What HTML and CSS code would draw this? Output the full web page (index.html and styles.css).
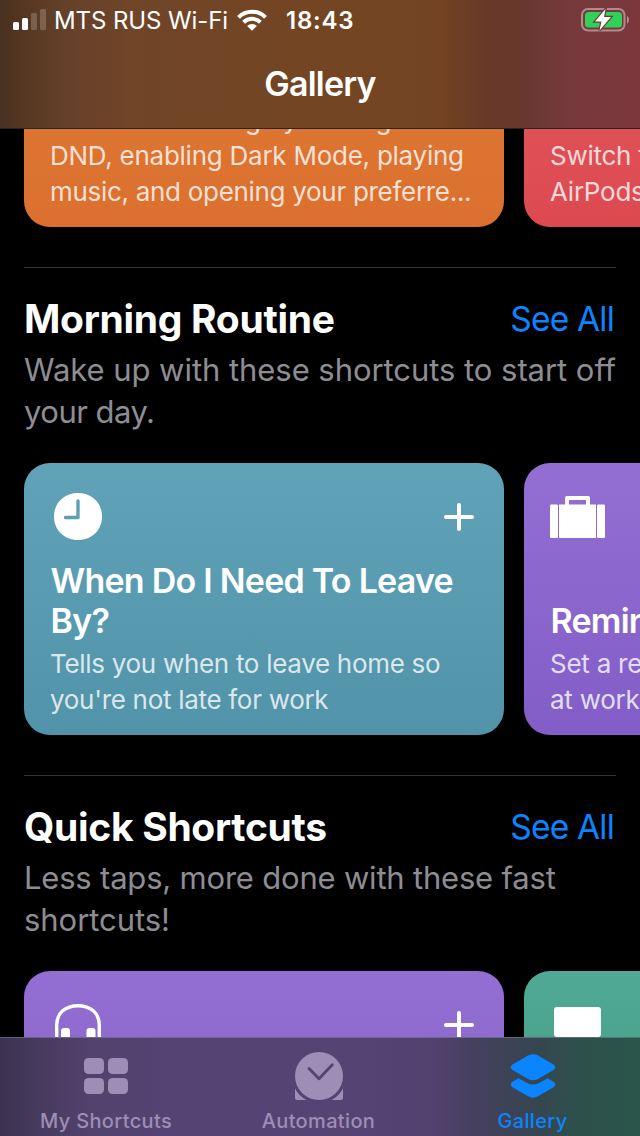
FILE: index.html
```html
<!DOCTYPE html>
<html lang="en">
<head>
<meta charset="utf-8">
<title>Gallery</title>
<link rel="stylesheet" href="styles.css">
</head>
<body>
<div class="screen">
  <header class="topbar">
    <div class="status">
      <svg class="signal" width="33" height="21" viewBox="0 0 33 21"><rect x="0" y="13" width="6" height="8" rx="1.5" fill="#fff"/><rect x="9" y="9" width="6" height="12" rx="1.5" fill="#fff"/><rect x="18" y="4" width="6" height="17" rx="1.5" fill="#fff" opacity=".2"/><rect x="27" y="0" width="6" height="21" rx="1.5" fill="#fff" opacity=".2"/></svg>
      <span class="carrier">MTS RUS Wi-Fi</span>
      <svg class="wifi" width="30" height="22" viewBox="0 0 30 22" fill="none" stroke="#fff" stroke-width="4"><path d="M1.5 8.4a19 19 0 0 1 27 0"/><path d="M6.600 13.300a12 12 0 0 1 16.800 0"/><path d="M15 21.800l-4.900-4.900a7 7 0 0 1 9.800 0z" fill="#fff" stroke="none"/></svg>
      <span class="time">18:43</span>
      <svg class="battery" width="49" height="24" viewBox="0 0 49 24"><rect x="1" y="1" width="42.500" height="21.500" rx="6" fill="none" stroke="#fff" stroke-opacity=".42" stroke-width="2"/><path d="M46 8v7.500c2.500-1 2.500-6.500 0-7.500z" fill="#fff" opacity=".45"/><rect x="4" y="4" width="37" height="15.500" rx="3.500" fill="#30d158"/><path d="M24.500 1L14 13.500h6.500l-2 9L30 9h-7z" fill="#fff" stroke="#6e3a38" stroke-width="2.400" paint-order="stroke"/></svg>
    </div>
    <h1 class="title"><span>Gallery</span></h1>
  </header>

  <main class="content">
    <div class="cards cards-cut">
      <article class="card orange"><p class="text"><span class="wide">Focus on reading by turning on</span><br>DND, enabling Dark Mode, playing<br><span class="tight">music, and opening your preferre...</span></p></article>
      <article class="card red"><p class="text">Switch the output to<br>AirPods or another</p></article>
    </div>

    <section class="section">
      <div class="heading"><h2 class="name">Morning Routine</h2><a class="all">See All</a></div>
      <p class="about"><span class="loose">Wake up with these shortcuts to start off</span><br><span class="snug">your day.</span></p>
      <div class="cards">
        <article class="card teal">
          <div class="icons">
            <svg class="clock" width="48" height="47" viewBox="0 0 48 47"><path d="M24 0C38 0 48 10 48 23.500S38 47 24 47 0 37 0 23.500 10 0 24 0z" fill="#fff"/><path d="M24 8v16.500H11.500" fill="none" stroke="#5b9fb4" stroke-width="3.300" stroke-linecap="round" stroke-linejoin="round"/></svg>
            <svg class="plus" width="30" height="28" viewBox="0 0 30 28"><path d="M2 14h26M15 2v24" stroke="#fff" stroke-width="4" stroke-linecap="round"/></svg>
          </div>
          <h3 class="label">When Do I Need To Leave<br>By?</h3>
          <p class="text"><span class="tight">Tells you when to leave home so<br>you're not late for work</span></p>
        </article>
        <article class="card purple">
          <div class="icons">
            <svg class="bag" width="55" height="42" viewBox="0 0 55 42" fill="#fff"><rect x="0" y="8.500" width="8" height="33.500" rx="1.200"/><rect x="9" y="8.500" width="37" height="33.500"/><rect x="47" y="8.500" width="8" height="33.500" rx="1.200"/><path d="M17 10V2h21v8" fill="none" stroke="#fff" stroke-width="4" stroke-linejoin="round"/></svg>
          </div>
          <h3 class="label">Remind Me</h3>
          <p class="text">Set a reminder<br>at work</p>
        </article>
      </div>
    </section>

    <section class="section">
      <div class="heading"><h2 class="name">Quick Shortcuts</h2><a class="all">See All</a></div>
      <p class="about">Less taps, more done with these fast<br><span class="loose">shortcuts!</span></p>
      <div class="cards">
        <article class="card purple">
          <div class="icons">
            <svg class="phones" width="46" height="48" viewBox="0 0 46 48"><path d="M1.700 33V21C1.700 9 10.500 1.700 23 1.700S44.300 9 44.300 21v12" fill="none" stroke="#fff" stroke-width="3.400"/><rect x="6" y="24" width="9" height="22" rx="3" fill="#fff"/><rect x="31.500" y="24" width="9" height="22" rx="3" fill="#fff"/></svg>
            <svg class="plus" width="30" height="28" viewBox="0 0 30 28"><path d="M2 14h26M15 2v24" stroke="#fff" stroke-width="4" stroke-linecap="round"/></svg>
          </div>
        </article>
        <article class="card green">
          <div class="icons">
            <svg class="panel" width="47" height="30" viewBox="0 0 47 30"><rect width="47" height="30" rx="3" fill="#fff"/></svg>
          </div>
        </article>
      </div>
    </section>
  </main>

  <nav class="tabs">
    <a class="tab">
      <svg width="44" height="36" viewBox="0 0 44 36" fill="currentColor"><rect width="20" height="16" rx="4.500"/><rect x="24" width="20" height="16" rx="4.500"/><rect y="20" width="20" height="16" rx="4.500"/><rect x="24" y="20" width="20" height="16" rx="4.500"/></svg>
      <span>My Shortcuts</span>
    </a>
    <a class="tab">
      <svg width="48" height="48" viewBox="0 0 48 48"><circle cx="24" cy="24" r="24" fill="currentColor"/><path d="M14 16.500l10 10.300L37.300 12.800" fill="none" stroke="#544373" stroke-width="2.800" stroke-linecap="round" stroke-linejoin="round"/><path d="M0 36.400A27 27 0 0 0 11.600 48H2Q0 48 0 46zM48 36.400A27 27 0 0 1 36.400 48H46Q48 48 48 46z" fill="currentColor"/></svg>
      <span>Automation</span>
    </a>
    <a class="tab active">
      <svg width="46" height="44" viewBox="0 0 46 44" fill="currentColor"><path d="M18 1.500Q23-1 28 1.500L43.500 10.500Q47 13.300 43.500 16L28 25Q23 27.500 18 25L2.500 16Q-1 13.300 2.500 10.500z"/><path d="M8.500 24.300L17 29Q23 32 29 29L37.500 24.300L43.500 27.800Q47 30.500 43.500 33.300L28 42.300Q23 45 18 42.300L2.500 33.300Q-1 30.500 2.500 27.800z"/></svg>
      <span>Gallery</span>
    </a>
  </nav>
</div>
</body>
</html>
```
FILE: styles.css
```css
* { box-sizing: border-box; }
body { margin: 0; background: #000; font-family: Inter, "Liberation Sans", sans-serif; }
h1, h2, h3, p { margin: 0; font-weight: 400; white-space: nowrap; }
svg { display: block; flex: none; }
.screen { display: flex; flex-direction: column; width: 640px; height: 1136px; overflow: hidden; color: #fff; }

.topbar {
  flex: none; height: 128px;
  background: linear-gradient(90deg, #4a3020 0, #563822 25px, #65402a 65px, #704528 130px, #734523 300px, #744523 400px, #734323 440px, #673828 490px, #68372e 520px, #763a3c 570px, #7c373d 640px);
}
.status { display: flex; align-items: center; height: 41px; padding-left: 13px; }
.signal { margin-top: -3px; }
.carrier { width: 174px; margin-left: 8px; font-size: 24px; white-space: nowrap; letter-spacing: -.1px; }
.wifi { margin: -2px 0 0 9px; }
.time { width: 68px; margin-left: 19px; font-size: 24px; font-weight: 600; letter-spacing: .8px; white-space: nowrap; }
.battery { margin-left: 227px; margin-top: -2px; }
.title { height: 86px; text-align: center; font-size: 34px; font-weight: 600; line-height: 86px; letter-spacing: -.8px; }

.content { flex: none; height: 909px; overflow: hidden; }
.cards { display: flex; gap: 20px; width: 640px; padding-left: 24px; overflow: hidden; }
.cards-cut { height: 99px; align-items: flex-end; border-top: 1px solid rgba(255, 255, 255, .15); }
.card { display: flex; flex-direction: column; justify-content: flex-end; flex: none; width: 480px; height: 272px; padding: 0 26px 17.5px; border-radius: 26px; }
.orange { background: linear-gradient(#e08037, #db6f2f); }
.red { background: linear-gradient(#e45a60, #dc4a50); }
.teal { background: linear-gradient(#60a3b8, #5193a9); }
.purple { background: linear-gradient(#936fd3, #825dc7); }
.green { background: linear-gradient(#4fa994, #3f967c); }
.text { font-size: 26px; line-height: 36px; letter-spacing: -.25px; color: rgba(255, 255, 255, .8); }
.tight { letter-spacing: -.3px; }
.wide { letter-spacing: -.1px; }
.icons { display: flex; align-items: center; justify-content: space-between; height: 54px; margin: 27px 4px auto 4px; }
.label { padding-left: .5px; font-size: 34px; line-height: 40px; font-weight: 600; letter-spacing: -.75px; margin-bottom: 5px; }
.clock { margin-top: -1px; }
.bag { margin-left: -4px; }
.phones { margin: 6px 0 0 1px; }
.panel { margin-top: -6px; }

.section { width: 592px; margin: 40px 0 0 24px; border-top: 1px solid #343436; }
.section .cards { width: 616px; padding-left: 0; margin-top: 30px; }
.heading { display: flex; justify-content: space-between; align-items: center; height: 48px; margin-top: 26px; padding-right: 2px; }
.name { font-size: 39px; font-weight: 700; letter-spacing: -.3px; }
.all { padding-top: 2px; font-size: 33.5px; color: #0a84ff; letter-spacing: -.8px; }
.about { margin-top: 7px; font-size: 31px; line-height: 42px; color: #8d8d93; letter-spacing: -.2px; }
.loose { letter-spacing: -.05px; }
.snug { letter-spacing: -.5px; }

.tabs { display: grid; grid-template-columns: 212px 213px 215px; flex: none; height: 99px; border-top: 1px solid rgba(255, 255, 255, .2); background: linear-gradient(90deg, #3c3250 0, #483c61 45px, #51426d 90px, #554374 180px, #554374 350px, #524270 430px, #44405d 480px, #354650 540px, #2d514b 580px, #2b554b 640px); }
.tab { display: grid; grid-template-rows: 76px 14px; place-items: center; align-content: start; color: #9d8eb5; font-size: 20px; font-weight: 500; letter-spacing: .35px; line-height: 14px; white-space: nowrap; }
.active { color: #0a84ff; }
```
